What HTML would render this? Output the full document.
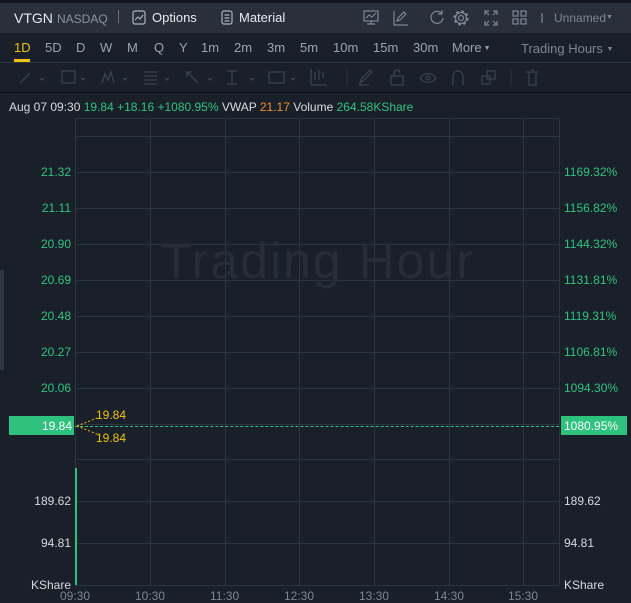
<!DOCTYPE html>
<html><head><meta charset="utf-8"><style>
*{margin:0;padding:0;box-sizing:border-box}
body{width:631px;height:603px;background:#1a202a;font-family:"Liberation Sans",sans-serif;position:relative;overflow:hidden;color:#c9ced6}
.abs{position:absolute;white-space:nowrap}
#top{position:absolute;left:0;top:0;width:631px;height:3px;background:#12161c}
#hdr{position:absolute;left:0;top:3px;width:631px;height:30px;background:#29303b}
.g{color:#2ec27e}
.y{color:#f0c20a}
.o{color:#f0902a}
.tab{font-size:13px;color:#9aa3ae;top:40px}
svg{position:absolute}
.hl{position:absolute;left:75px;width:484px;height:1px;background:#2c343f}
.vl{position:absolute;top:118px;width:1px;height:467px;background:#2c343f}
.lab{font-size:12px;position:absolute;white-space:nowrap}
.L{right:560px;text-align:right;width:60px}
</style></head><body>
<div id="top"></div>
<div id="hdr"></div>
<div class="abs" style="left:14px;top:10px;font-size:14px;color:#e6e9ee">VTGN</div>
<div class="abs" style="left:57px;top:12px;font-size:12px;color:#8a93a0">NASDAQ</div>
<div class="abs" style="left:118px;top:10px;width:1px;height:13px;background:#6a7280"></div>
<svg style="left:132px;top:10px" width="14" height="15" viewBox="0 0 14 15" fill="none" stroke="#aab2bd" stroke-width="1.2"><rect x="1" y="1" width="12" height="13" rx="2"/><path d="M3 10l3-3 2 2 3-4"/></svg>
<div class="abs" style="left:152px;top:10px;font-size:13px;color:#e6e9ee">Options</div>
<svg style="left:221px;top:10px" width="12" height="15" viewBox="0 0 12 15" fill="none" stroke="#aab2bd" stroke-width="1.2"><rect x="1" y="1" width="10" height="13" rx="2"/><path d="M3.5 5h5M3.5 8h5M3.5 11h5"/></svg>
<div class="abs" style="left:239px;top:10px;font-size:13px;color:#e6e9ee">Material</div>
<svg style="left:363px;top:9px" width="180" height="18" viewBox="0 0 180 18" fill="none" stroke="#7d8693" stroke-width="1.2">
<rect x="1" y="2" width="14" height="10"/><path d="M8 12v3M4 15h8M3 9l3-3 3 2 4-4"/>
<path d="M31 2v14h14M34 12l1-3 6-6 2 2-6 6z"/>
<path d="M79 5a6 6 0 1 0 1 4M79 1v4h-4"/>
<circle cx="98" cy="9" r="2.5"/><circle cx="98" cy="9" r="5.5"/><circle cx="98" cy="9" r="6.5" stroke-width="2.2" stroke-dasharray="2.6 2.5"/>
<path d="M122 6V2h4M134 6V2h-4M122 12v4h4M134 12v4h-4M123 3l3 3M133 3l-3 3M123 15l3-3M133 15l-3-3"/>
<rect x="150" y="2" width="5" height="5"/><rect x="158" y="2" width="5" height="5"/><rect x="150" y="10" width="5" height="5"/><rect x="158" y="10" width="5" height="5"/>
<path d="M179 4v10"/></svg>
<div class="abs" style="left:554px;top:11px;font-size:12px;color:#7d8693">Unnamed<span style="font-size:7px;position:relative;top:-3px">▼</span></div>
<div class="abs tab" style="left:14px;color:#f0c20a">1D</div>
<div style="position:absolute;left:14px;top:59px;width:16px;height:3px;background:#f0c20a"></div>
<div class="abs tab" style="left:45px">5D</div>
<div class="abs tab" style="left:76px">D</div>
<div class="abs tab" style="left:100px">W</div>
<div class="abs tab" style="left:127px">M</div>
<div class="abs tab" style="left:154px">Q</div>
<div class="abs tab" style="left:179px">Y</div>
<div class="abs tab" style="left:201px">1m</div>
<div class="abs tab" style="left:234px">2m</div>
<div class="abs tab" style="left:267px">3m</div>
<div class="abs tab" style="left:300px">5m</div>
<div class="abs tab" style="left:333px">10m</div>
<div class="abs tab" style="left:373px">15m</div>
<div class="abs tab" style="left:413px">30m</div>
<div class="abs tab" style="left:452px">More<span style="font-size:7px;position:relative;top:-2px"> ▼</span></div>
<div class="abs tab" style="left:521px;top:41px;color:#7d8693">Trading Hours <span style="font-size:7px;position:relative;top:-2px">▼</span></div>
<div style="position:absolute;left:0;top:62px;width:631px;height:1px;background:#2f3742"></div>
<svg style="left:15px;top:67px" width="540" height="22" viewBox="0 0 540 22" fill="none" stroke="#3a424d" stroke-width="1.3">
<path d="M5 16l10-10M25 11l2 2 2-2"/>
<rect x="47" y="4" width="13" height="12"/><path d="M66 11l2 2 2-2"/>
<path d="M87 16l3-9 3 6 3-8 3 11M108 11l2 2 2-2"/>
<path d="M129 5h13M129 9h13M129 13h13M129 17h13M150 11l2 2 2-2"/>
<path d="M172 5l11 11M172 5v5M172 5h5M193 11l2 2 2-2"/>
<path d="M212 4h10M217 4v13M212 17h10M235 11l2 2 2-2"/>
<rect x="254" y="5" width="15" height="11"/><path d="M276 11l2 2 2-2"/>
<path d="M296 2v16h16M300 5v8M304 3v10M308 5v6"/>
<path d="M332 2v16" stroke="#2a313b"/>
<path d="M345 16l2-5 8-8 2 2-8 8zM344 18h10"/>
<rect x="376" y="9" width="12" height="9"/><path d="M379 9V6a3 3 0 0 1 6 0"/>
<path d="M405 11q8-9 16 0q-8 9-16 0z"/><circle cx="413" cy="11" r="2"/>
<path d="M438 18V9a5 5 0 0 1 10 0v9"/>
<rect x="467" y="9" width="8" height="8"/><rect x="472" y="4" width="8" height="8"/>
<path d="M496 2v16" stroke="#2a313b"/>
<path d="M511 5h12M514 5v13h7V5M516 3h3"/></svg>
<div style="position:absolute;left:0;top:92px;width:631px;height:1px;background:#10141a"></div>
<div class="abs" style="left:9px;top:100px;font-size:12px;color:#d5dae1">Aug 07 09:30 <span class="g">19.84 +18.16 +1080.95%</span> VWAP <span class="o">21.17</span> Volume <span class="g">264.58KShare</span></div>
<!-- grid -->
<div class="hl" style="top:118px"></div><div class="hl" style="top:136px"></div>
<div class="hl" style="top:172px"></div><div class="hl" style="top:208px"></div><div class="hl" style="top:244px"></div><div class="hl" style="top:280px"></div><div class="hl" style="top:316px"></div><div class="hl" style="top:352px"></div><div class="hl" style="top:388px"></div><div class="hl" style="top:424px"></div><div class="hl" style="top:459px"></div><div class="hl" style="top:501px"></div><div class="hl" style="top:543px"></div><div class="hl" style="top:585px"></div>
<div class="vl" style="left:75px"></div><div class="vl" style="left:150px"></div><div class="vl" style="left:225px"></div><div class="vl" style="left:299px"></div><div class="vl" style="left:374px"></div><div class="vl" style="left:449px"></div><div class="vl" style="left:523px"></div><div class="vl" style="left:559px"></div>
<div style="position:absolute;left:0;top:270px;width:4px;height:100px;background:#2e3643"></div>
<div class="abs" style="left:161px;top:236px;font-size:50px;line-height:1;letter-spacing:2px;color:#262d37">Trading Hour</div>
<div class="lab g L" style="top:165px">21.32</div><div class="lab g L" style="top:201px">21.11</div><div class="lab g L" style="top:237px">20.90</div><div class="lab g L" style="top:273px">20.69</div><div class="lab g L" style="top:309px">20.48</div><div class="lab g L" style="top:345px">20.27</div><div class="lab g L" style="top:381px">20.06</div>
<div class="lab g" style="left:564px;top:165px">1169.32%</div><div class="lab g" style="left:564px;top:201px">1156.82%</div><div class="lab g" style="left:564px;top:237px">1144.32%</div><div class="lab g" style="left:564px;top:273px">1131.81%</div><div class="lab g" style="left:564px;top:309px">1119.31%</div><div class="lab g" style="left:564px;top:345px">1106.81%</div><div class="lab g" style="left:564px;top:381px">1094.30%</div>
<div style="position:absolute;left:9px;top:416px;width:65px;height:19px;background:#2ec27e"></div>
<div class="lab" style="left:9px;width:63px;text-align:right;top:419px;color:#fff">19.84</div>
<div style="position:absolute;left:561px;top:416px;width:66px;height:19px;background:#2ec27e"></div>
<div class="lab" style="left:564px;top:419px;color:#fff">1080.95%</div>
<div style="position:absolute;left:75px;top:426px;width:484px;border-top:1px dashed #2ec27e"></div>
<svg style="left:76px;top:412px" width="22" height="26"><path d="M1 14l20-8M1 14l20 8" stroke="#f0c20a" stroke-dasharray="2 2" fill="none"/></svg>
<div class="lab y" style="left:96px;top:408px">19.84</div>
<div class="lab y" style="left:96px;top:431px">19.84</div>
<div style="position:absolute;left:75px;top:468px;width:2px;height:117px;background:#2ec27e"></div>
<div class="lab L" style="top:494px;color:#d5dae1">189.62</div><div class="lab L" style="top:536px;color:#d5dae1">94.81</div><div class="lab L" style="top:578px;color:#d5dae1">KShare</div>
<div class="lab" style="left:564px;top:494px;color:#d5dae1">189.62</div><div class="lab" style="left:564px;top:536px;color:#d5dae1">94.81</div><div class="lab" style="left:564px;top:578px;color:#d5dae1">KShare</div>
<div class="lab" style="left:60px;top:589px;color:#7d8693">09:30</div><div class="lab" style="left:135px;top:589px;color:#7d8693">10:30</div><div class="lab" style="left:210px;top:589px;color:#7d8693">11:30</div><div class="lab" style="left:284px;top:589px;color:#7d8693">12:30</div><div class="lab" style="left:359px;top:589px;color:#7d8693">13:30</div><div class="lab" style="left:434px;top:589px;color:#7d8693">14:30</div><div class="lab" style="left:508px;top:589px;color:#7d8693">15:30</div>
</body></html>
